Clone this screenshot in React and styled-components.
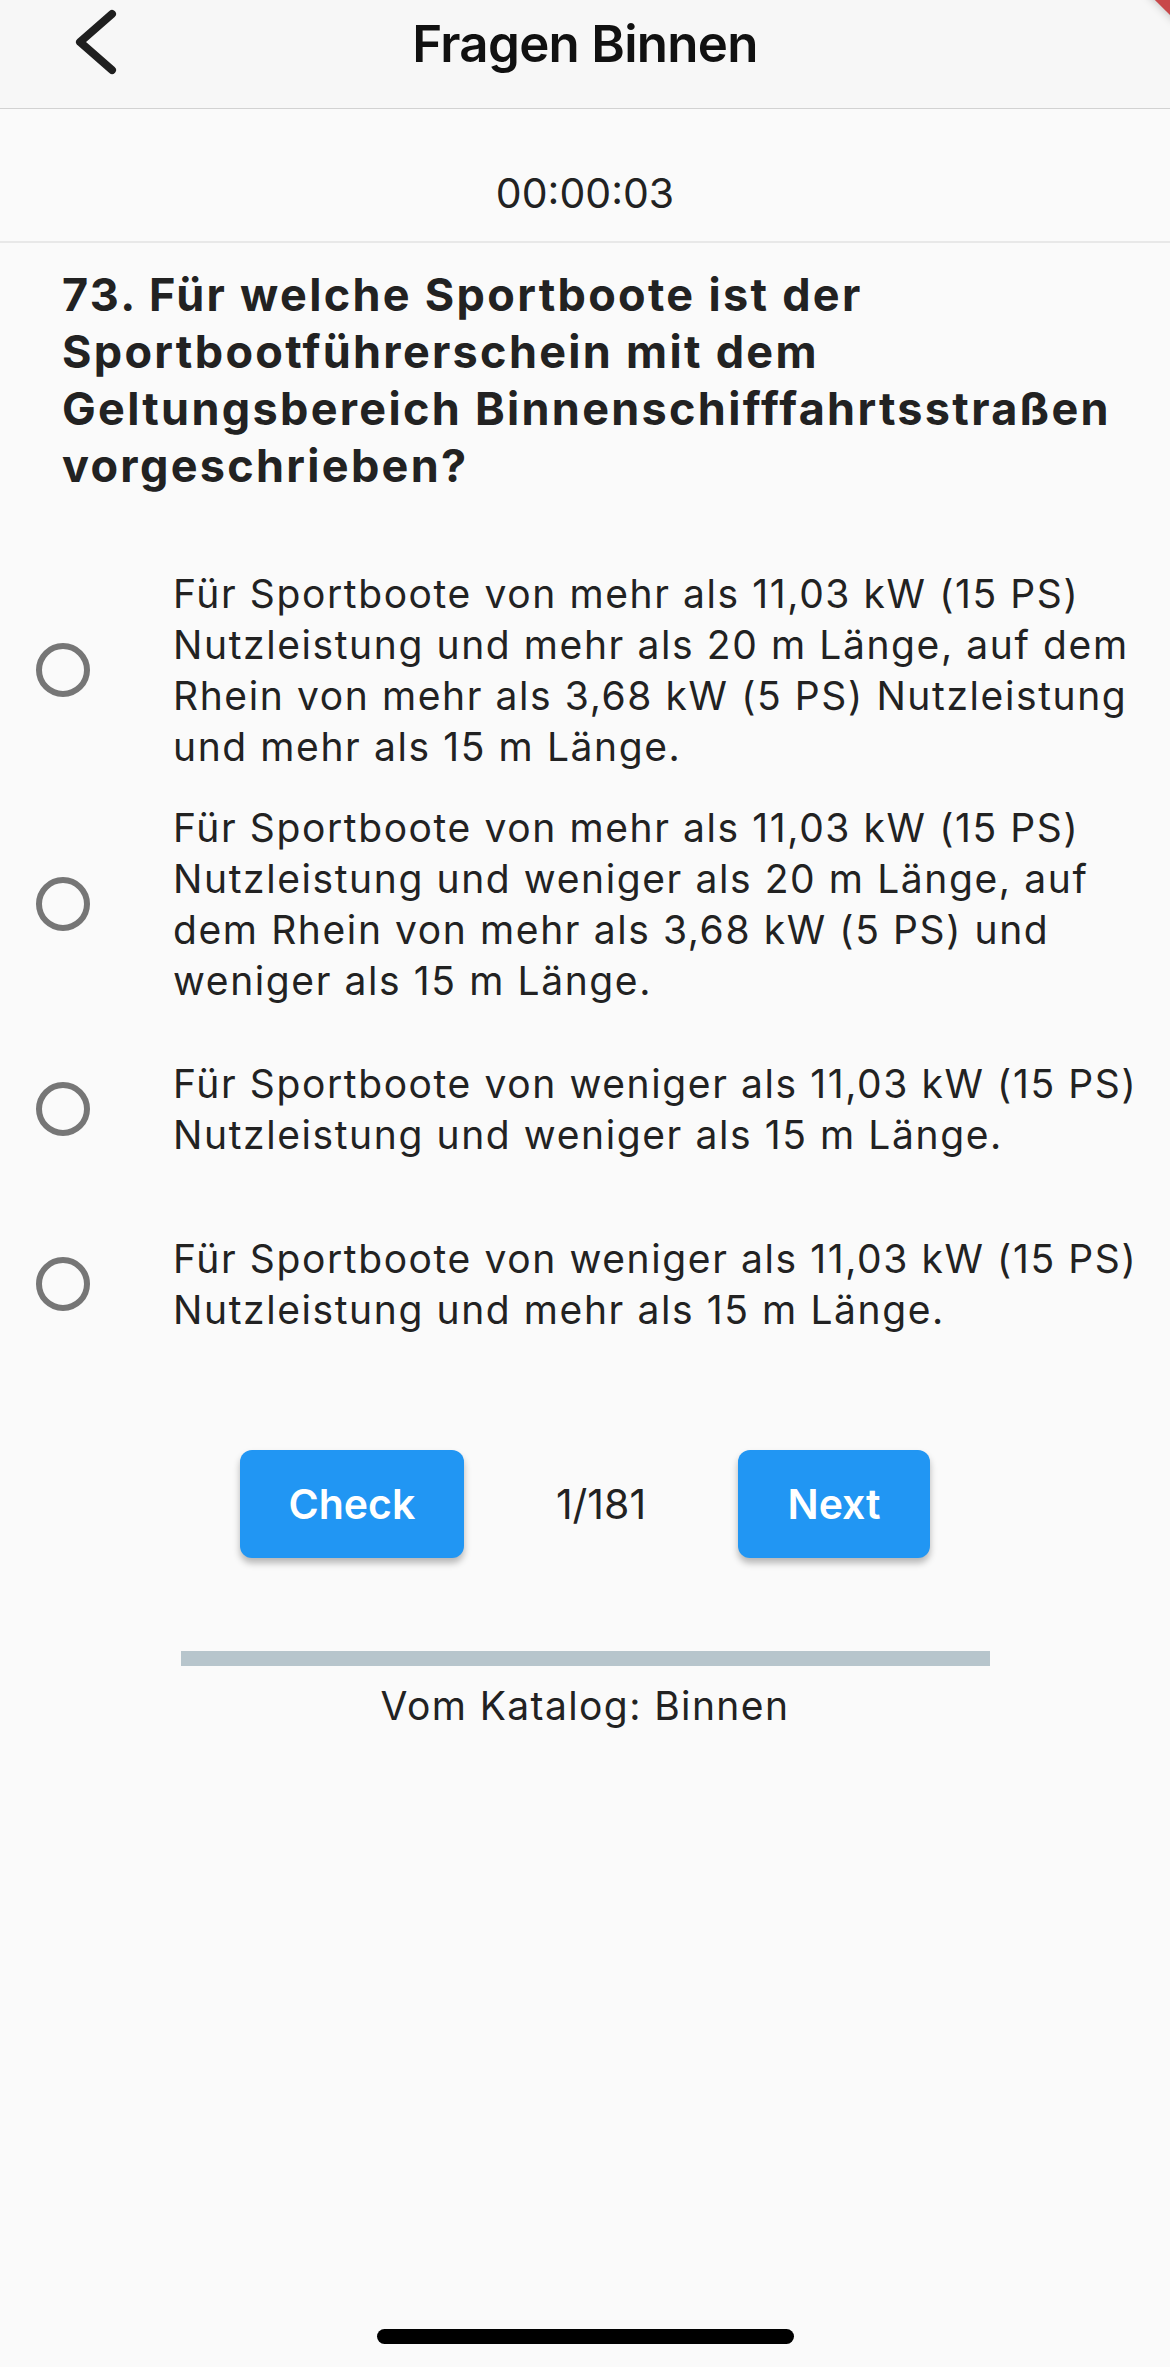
import React, { useState } from "react";
import styled, { createGlobalStyle } from "styled-components";

const GlobalStyle = createGlobalStyle`
  html, body { margin: 0; padding: 0; background: #fafafa; }
  * { box-sizing: border-box; }
`;

const Page = styled.div`
  position: relative;
  min-height: 2367px;
  display: flex;
  flex-direction: column;
  background: #fafafa;
  font-family: Inter, "Noto Sans", sans-serif;
  color: #222;
  overflow: hidden;
`;

const DebugCorner = styled.div`
  position: absolute;
  top: -30px;
  right: -30px;
  width: 44px;
  height: 44px;
  background: #c8484a;
  transform: rotate(45deg);
  box-shadow: 0 0 10px rgba(0, 0, 0, 0.25);
`;

const Header = styled.header`
  display: grid;
  grid-template-columns: 1fr auto 1fr;
  align-items: start;
  height: 109px;
  padding-top: 18px;
  background: #f7f7f7;
  border-bottom: 1px solid #d2d2d2;
`;

const BackButton = styled.button`
  justify-self: start;
  margin: -9px 0 0 74px;
  padding: 0;
  border: none;
  background: none;
  cursor: pointer;
  line-height: 0;
`;

const Title = styled.h1`
  margin: 0;
  font-size: 51px;
  line-height: 1;
  font-weight: 600;
  color: #111;
  letter-spacing: -0.7px;
`;

const TimerBar = styled.div`
  padding: 64px 0 27px;
  text-align: center;
  font-size: 41px;
  line-height: 1;
  border-bottom: 2px solid #e8e8e8;
`;

const Question = styled.h2`
  margin: 0;
  padding: 23px 40px 0 62px;
  font-size: 45px;
  line-height: 57px;
  font-weight: 700;
  color: #222;
  letter-spacing: 2.3px;
`;

const Options = styled.div`
  display: flex;
  flex-direction: column;
  margin-top: 59px;
`;

const OptionRow = styled.label`
  display: flex;
  align-items: center;
  gap: 83px;
  min-height: 175px;
  padding: 15px 24px 15px 36px;
  cursor: pointer;
`;

const Radio = styled.span`
  flex: 0 0 54px;
  width: 54px;
  height: 54px;
  border-radius: 50%;
  border: 6px solid ${({ checked }) => (checked ? "#2196f3" : "#767676")};
  display: flex;
  align-items: center;
  justify-content: center;
  &::after {
    content: "";
    width: 26px;
    height: 26px;
    border-radius: 50%;
    background: #2196f3;
    display: ${({ checked }) => (checked ? "block" : "none")};
  }
`;

const OptionText = styled.span`
  font-size: 39px;
  line-height: 51px;
  color: #222;
  letter-spacing: 1.6px;
`;

const Controls = styled.div`
  display: flex;
  justify-content: center;
  align-items: center;
  gap: 92px;
  margin-top: 79px;
`;

const ActionButton = styled.button`
  width: ${({ w }) => w}px;
  height: 108px;
  border: none;
  border-radius: 12px;
  background: #2196f3;
  color: #fff;
  font-family: Inter, "Noto Sans", sans-serif;
  font-size: 41px;
  font-weight: 600;
  box-shadow: 0 5px 7px rgba(0, 0, 0, 0.28);
  cursor: pointer;
`;

const Counter = styled.span`
  font-size: 41px;
  color: #222;
`;

const Progress = styled.div`
  align-self: center;
  width: 809px;
  height: 15px;
  margin-top: 93px;
  background: #b7c5cc;
`;

const Catalog = styled.div`
  margin-top: 16px;
  text-align: center;
  font-size: 39px;
  line-height: 47px;
  color: #222;
  letter-spacing: 1.4px;
`;

const HomeIndicator = styled.div`
  align-self: center;
  width: 417px;
  height: 15px;
  margin: auto 0 23px;
  border-radius: 8px;
  background: #000;
`;

const answers = [
  "Für Sportboote von mehr als 11,03 kW (15 PS) Nutzleistung und mehr als 20 m Länge, auf dem Rhein von mehr als 3,68 kW (5 PS) Nutzleistung und mehr als 15 m Länge.",
  "Für Sportboote von mehr als 11,03 kW (15 PS) Nutzleistung und weniger als 20 m Länge, auf dem Rhein von mehr als 3,68 kW (5 PS) und weniger als 15 m Länge.",
  "Für Sportboote von weniger als 11,03 kW (15 PS) Nutzleistung und weniger als 15 m Länge.",
  "Für Sportboote von weniger als 11,03 kW (15 PS) Nutzleistung und mehr als 15 m Länge.",
];

export default function App() {
  const [selected, setSelected] = useState(null);

  return (
    <Page>
      <GlobalStyle />
      <DebugCorner />
      <Header>
        <BackButton aria-label="Zurück">
          <svg width="44" height="66" viewBox="0 0 44 66" fill="none">
            <polyline
              points="38,5 6,33 38,61"
              stroke="#1f1f1f"
              strokeWidth="8"
              strokeLinecap="round"
              strokeLinejoin="round"
            />
          </svg>
        </BackButton>
        <Title>Fragen Binnen</Title>
        <span />
      </Header>

      <TimerBar>00:00:03</TimerBar>

      <Question>
        73. Für welche Sportboote ist der Sportbootführerschein mit dem Geltungsbereich Binnenschifffahrtsstraßen vorgeschrieben?
      </Question>

      <Options>
        {answers.map((text, i) => (
          <OptionRow key={i} onClick={() => setSelected(i)}>
            <Radio checked={selected === i} />
            <OptionText>{text}</OptionText>
          </OptionRow>
        ))}
      </Options>

      <Controls>
        <ActionButton w={224}>Check</ActionButton>
        <Counter>1/181</Counter>
        <ActionButton w={192}>Next</ActionButton>
      </Controls>

      <Progress />
      <Catalog>Vom Katalog: Binnen</Catalog>

      <HomeIndicator />
    </Page>
  );
}
